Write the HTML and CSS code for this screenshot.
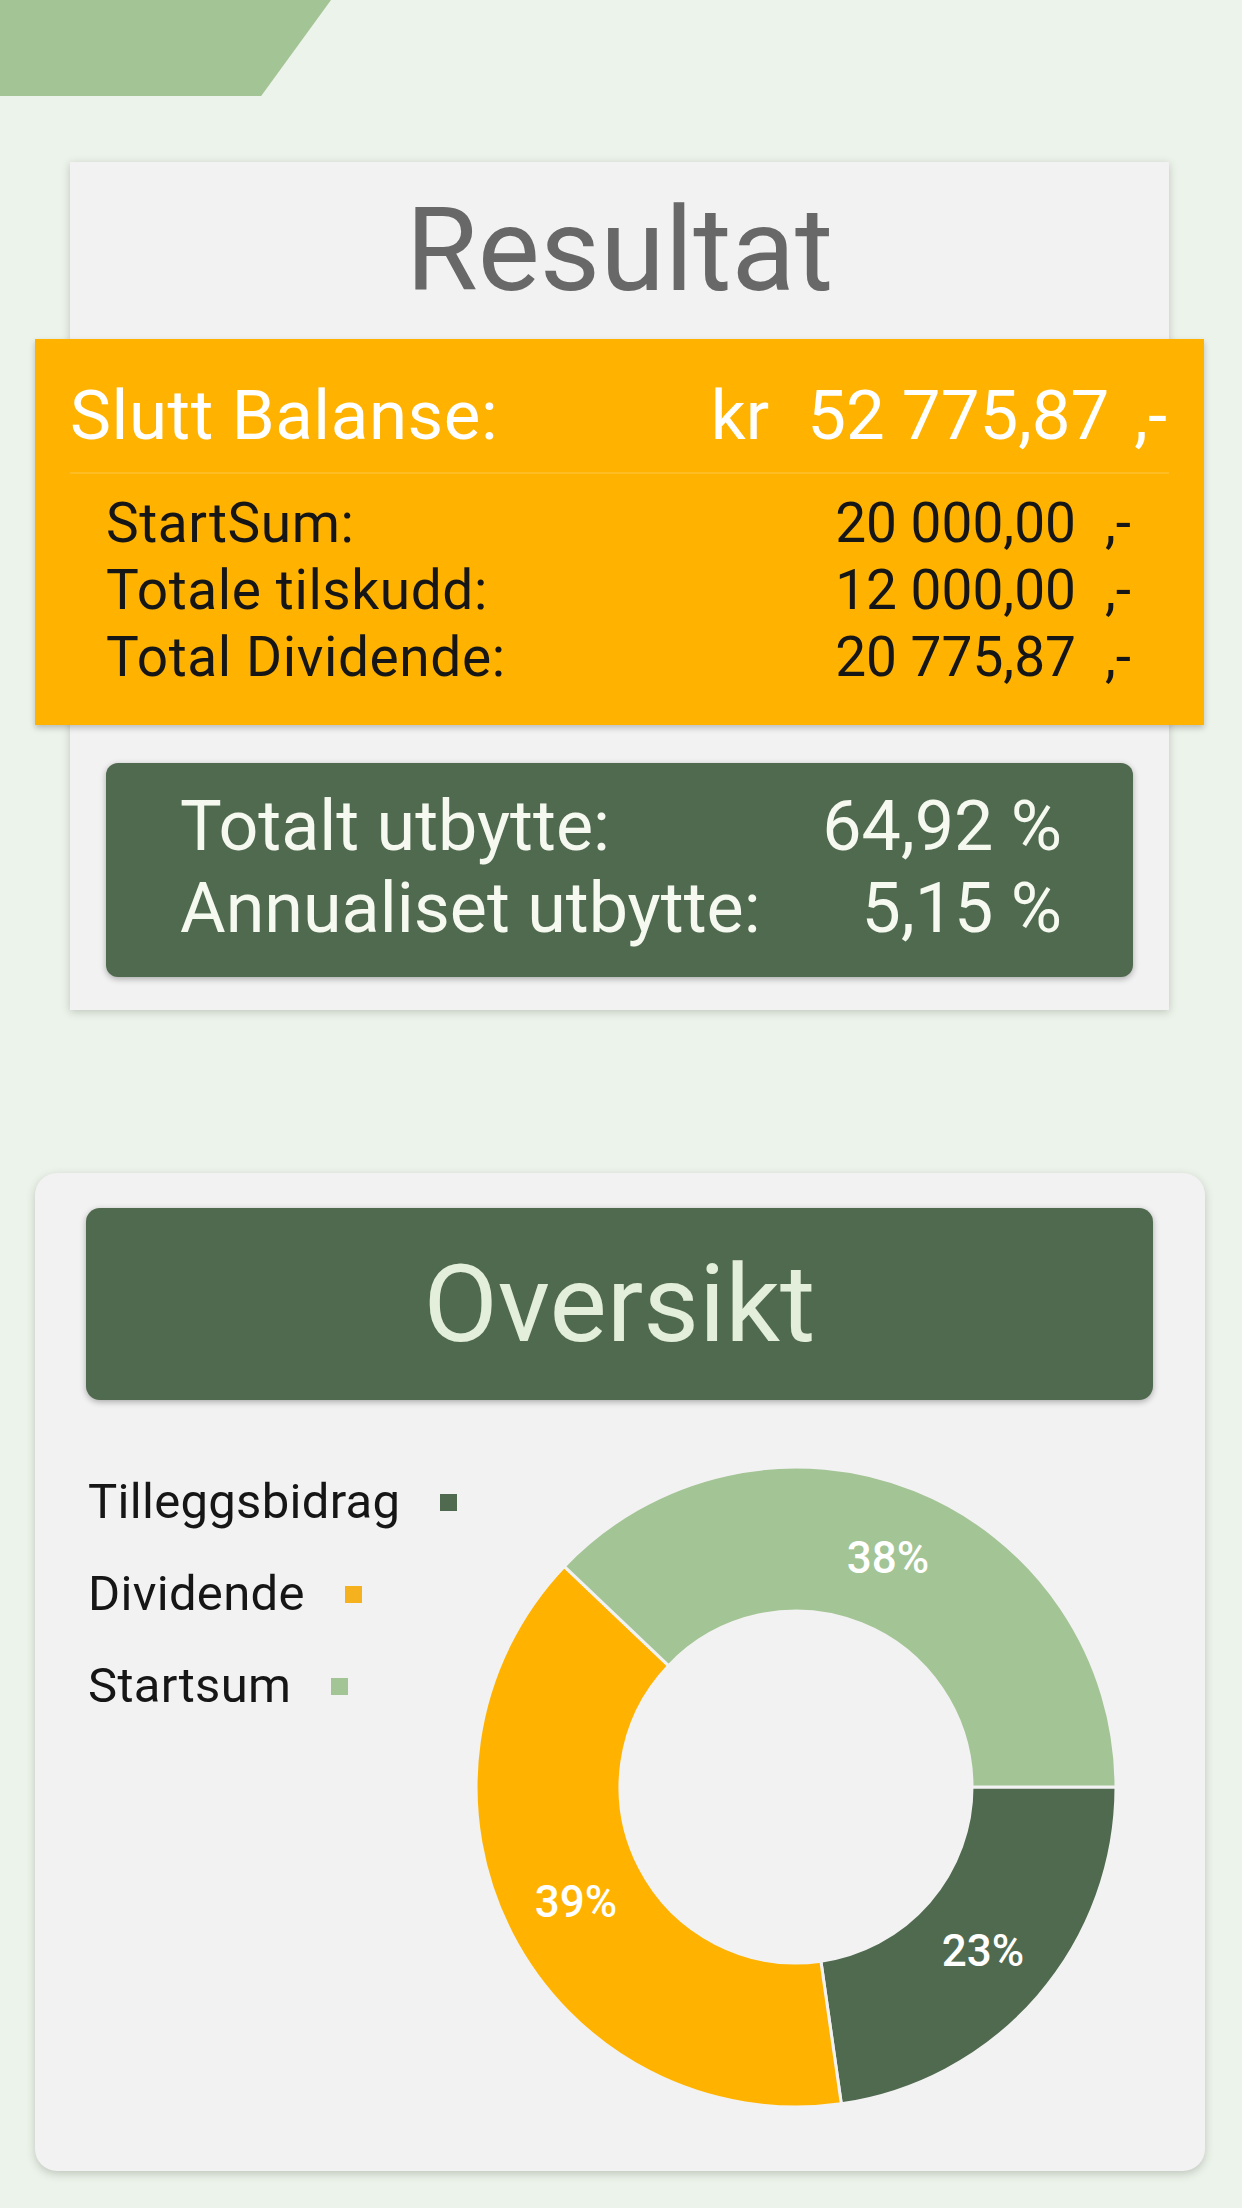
FILE: index.html
```html
<!DOCTYPE html>
<html lang="no">
<head>
<meta charset="utf-8">
<title>Resultat</title>
<link rel="stylesheet" href="styles.css">
</head>
<body>
<div class="page">
  <div class="tab"></div>

  <section class="card result">
    <h1 class="title">Resultat</h1>
    <div class="balance">
      <div class="balance-head">
        <span class="bh-label">Slutt Balanse:</span>
        <span class="bh-cur">kr</span>
        <span class="bh-val">52 775,87</span>
        <span class="bh-suf">,-</span>
      </div>
      <div class="divider"></div>
      <div class="rows">
        <span class="r-label">StartSum:</span><span class="r-val">20 000,00</span><span class="r-suf">,-</span>
        <span class="r-label">Totale tilskudd:</span><span class="r-val">12 000,00</span><span class="r-suf">,-</span>
        <span class="r-label">Total Dividende:</span><span class="r-val">20 775,87</span><span class="r-suf">,-</span>
      </div>
    </div>
    <div class="yield">
      <div class="y-row"><span>Totalt utbytte:</span><span>64,92 %</span></div>
      <div class="y-row"><span>Annualiset utbytte:</span><span>5,15 %</span></div>
    </div>
  </section>

  <section class="card overview">
    <div class="ov-head">Oversikt</div>
    <div class="chart">
      <ul class="legend">
        <li class="lg-item"><span>Tilleggsbidrag</span><i class="sw sw-dark"></i></li>
        <li class="lg-item"><span>Dividende</span><i class="sw sw-orange"></i></li>
        <li class="lg-item"><span>Startsum</span><i class="sw sw-light"></i></li>
      </ul>
      <svg class="donut" width="660" height="660" viewBox="0 0 660 660">
        <path class="seg-dark" d="M 650 330 A 320 320 0 0 1 375.31 646.78 L 354.92 504.23 A 176 176 0 0 0 506 330 Z"/>
        <path class="seg-orange" d="M 375.31 646.78 A 320 320 0 0 1 98.26 109.39 L 202.54 208.67 A 176 176 0 0 0 354.92 504.23 Z"/>
        <path class="seg-light" d="M 98.26 109.39 A 320 320 0 0 1 650 330 L 506 330 A 176 176 0 0 0 202.54 208.67 Z"/>
        <text class="pct" x="517" y="494">23%</text>
        <text class="pct" x="110" y="445">39%</text>
        <text class="pct" x="422" y="101">38%</text>
      </svg>
    </div>
  </section>
</div>
</body>
</html>
```

FILE: styles.css
```css
* { box-sizing: border-box; }

html, body {
  margin: 0;
  padding: 0;
}

body {
  background: #ecf3ea;
  font-family: Roboto, "Noto Sans", "Liberation Sans", sans-serif;
  width: 1242px;
  min-height: 2208px;
  overflow: hidden;
}

.page {
  display: flex;
  flex-direction: column;
  align-items: flex-start;
}

.tab {
  width: 331px;
  height: 96px;
  background: #a3c495;
  clip-path: polygon(0 0, 100% 0, 78.9% 100%, 0 100%);
}

.card {
  background: #f2f2f2;
}

/* ---------- Resultat ---------- */
.result {
  margin-top: 66px;
  margin-left: 70px;
  width: 1099px;
  padding: 30px 36px 33px;
  box-shadow: 0 2px 8px rgba(60, 70, 60, 0.25);
}

.title {
  margin: 0 0 30px;
  font-weight: 400;
  font-size: 117px;
  line-height: 117px;
  color: #686868;
  text-align: center;
}

.balance {
  margin: 0 -71px;
  background: #ffb300;
  padding: 37px 73px 34px 35px;
  box-shadow: 0 3px 6px rgba(0, 0, 0, 0.22);
  position: relative;
}

.balance-head {
  display: flex;
  align-items: baseline;
  color: #ffffff;
  font-size: 69px;
  line-height: 80px;
  margin-right: -36px;
}

.bh-label {
  flex: 1;
  letter-spacing: 0.6px;
}
.bh-cur { margin-right: 38px; }
.bh-suf { margin-left: 25px; }

.divider {
  height: 2px;
  margin: 16px -38px 16px 0;
  background: rgba(255, 255, 255, 0.14);
}

.rows {
  display: grid;
  grid-template-columns: 1fr auto auto;
  column-gap: 29px;
  padding-left: 36px;
  font-size: 55px;
  line-height: 67px;
  color: #161616;
}

.r-label { letter-spacing: 0.6px; }

/* ---------- Yield box ---------- */
.yield {
  margin-top: 38px;
  background: #506a4f;
  border-radius: 12px;
  padding: 22px 71px 28px 74px;
  color: #f5f9ef;
  font-size: 70px;
  line-height: 82px;
  box-shadow: 0 2px 6px rgba(0, 0, 0, 0.3);
}

.y-row {
  display: flex;
  justify-content: space-between;
}

/* ---------- Oversikt ---------- */
.overview {
  margin-top: 163px;
  margin-left: 35px;
  width: 1170px;
  border-radius: 22px;
  padding: 35px 52px 54px 51px;
  box-shadow: 0 3px 9px rgba(60, 70, 60, 0.25);
}

.ov-head {
  height: 192px;
  background: #506a4f;
  border-radius: 14px;
  color: #e3efda;
  font-size: 108px;
  line-height: 192px;
  text-align: center;
  box-shadow: 0 2px 6px rgba(0, 0, 0, 0.3);
}

.chart {
  display: flex;
  margin-top: 57px;
}

.legend {
  list-style: none;
  margin: 0;
  padding: 17px 0 0 2px;
  width: 380px;
  display: flex;
  flex-direction: column;
  gap: 36px;
}

.lg-item {
  display: flex;
  align-items: center;
  gap: 40px;
  font-size: 49px;
  line-height: 56px;
  letter-spacing: 0.3px;
  color: #161616;
}

.sw {
  display: block;
  width: 17px;
  height: 17px;
}

.sw-dark { background: #506a4f; }
.sw-orange { background: #f6b21e; }
.sw-light { background: #a3c495; }

.donut {
  display: block;
  flex: none;
}

.donut path {
  stroke: #f2f2f2;
  stroke-width: 3;
  stroke-linejoin: round;
}

.seg-dark { fill: #506a4f; }
.seg-orange { fill: #ffb300; }
.seg-light { fill: #a3c495; }

.pct {
  fill: #ffffff;
  font-family: Roboto, "Noto Sans", sans-serif;
  font-size: 44px;
  font-weight: 500;
  text-anchor: middle;
  dominant-baseline: central;
}
```
